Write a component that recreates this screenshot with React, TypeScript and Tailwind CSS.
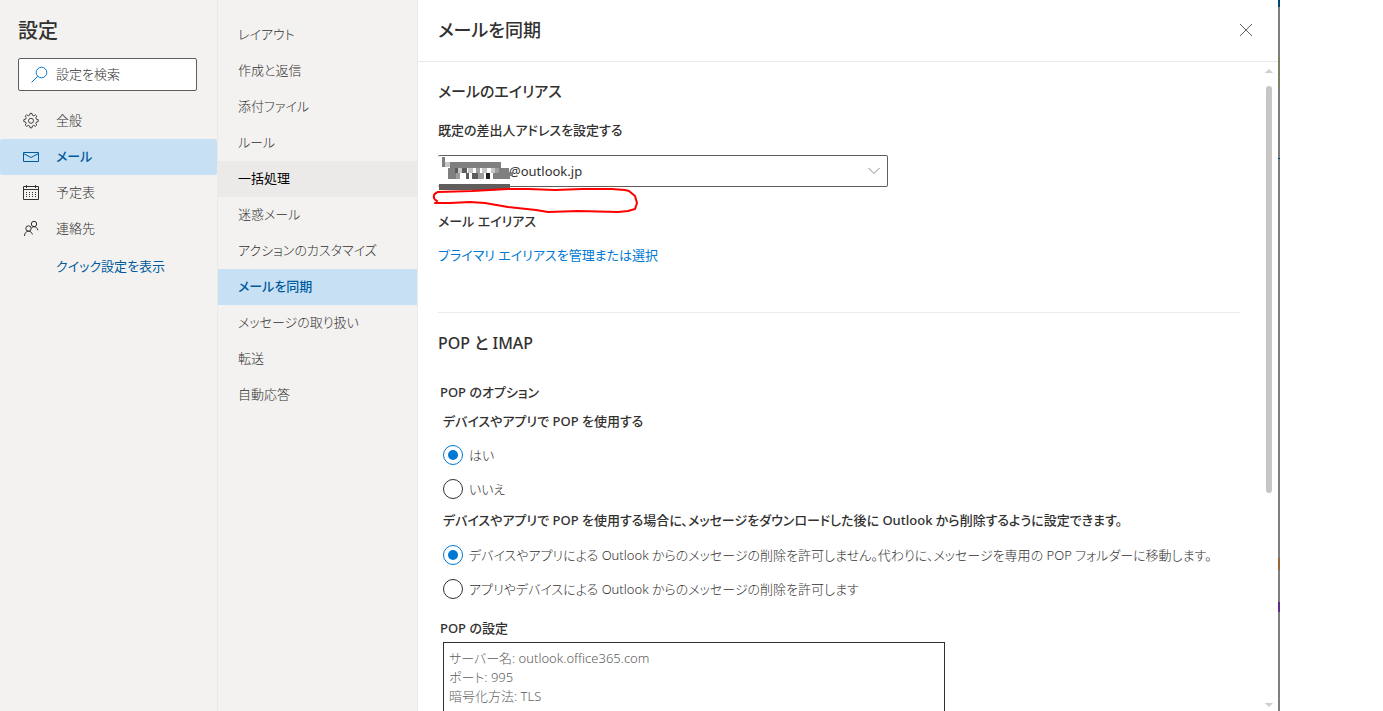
import React, { useState } from 'react';

const mainMenu = [
  { id: 'general', label: '全般', icon: GearIcon },
  { id: 'mail', label: 'メール', icon: MailIcon },
  { id: 'calendar', label: '予定表', icon: CalendarIcon },
  { id: 'people', label: '連絡先', icon: PeopleIcon },
];

const mailMenu = [
  'レイアウト',
  '作成と返信',
  '添付ファイル',
  'ルール',
  '一括処理',
  '迷惑メール',
  'アクションのカスタマイズ',
  'メールを同期',
  'メッセージの取り扱い',
  '転送',
  '自動応答',
];

// 歯車の 8 枚歯
function GearIcon() {
  return (
    <svg width="18" height="18" viewBox="0 0 18 18" fill="none" stroke="currentColor" strokeWidth="0.9">
      <path d="M7.600 3.200 8 1.400h2l.4 1.800 1.400.6 1.600-1 1.400 1.400-1 1.600.6 1.400 1.800.4v2l-1.800.4-.6 1.400 1 1.600-1.400 1.400-1.600-1-1.400.6-.4 1.800H8l-.4-1.800-1.400-.6-1.600 1L3.200 13l1-1.600-.6-1.400-1.800-.4v-2l1.800-.4.6-1.400-1-1.600L4.600 2.800l1.600 1z" />
      <circle cx="9" cy="8.800" r="2.500" />
    </svg>
  );
}

function MailIcon() {
  return (
    <svg width="18" height="18" viewBox="0 0 18 18" fill="none" stroke="currentColor">
      <path d="M1.500 4.500h15v9h-15z" />
      <path d="M1.500 5.500 9 9.500l7.500-4" />
    </svg>
  );
}

function CalendarIcon() {
  return (
    <svg width="18" height="18" viewBox="0 0 18 18" fill="none" stroke="currentColor">
      <path d="M1.500 2.500h15v13h-15zM1.500 5.500h15M4.500 1v3M13.500 1v3" />
      <path d="M4 8.500h10M4 10.500h10M4 12.500h10" strokeDasharray="1 2" />
    </svg>
  );
}

function PeopleIcon() {
  return (
    <svg width="18" height="18" viewBox="0 0 18 18" fill="none" stroke="currentColor">
      <circle cx="6.500" cy="8.500" r="2.700" />
      <path d="M2.500 16c0-2.800 1.600-4.800 4-4.800s3.300 1.500 3.900 3.300" />
      <circle cx="12" cy="4" r="2.700" />
      <path d="M9.300 8.300c.7-1 1.600-1.600 2.700-1.600 2 0 3.400 1.400 3.900 3.600" />
    </svg>
  );
}

type RadioProps = {
  name: string;
  label: string;
  checked: boolean;
  onChange: () => void;
};

function Radio({ name, label, checked, onChange }: RadioProps) {
  return (
    <label className="flex h-[34px] items-center gap-1.5">
      <input
        type="radio"
        name={name}
        checked={checked}
        onChange={onChange}
        className="grid size-5 shrink-0 appearance-none place-content-center rounded-full border border-[#323130] bg-white before:size-2.5 before:rounded-full checked:border-[#0078d4] checked:before:bg-[#0078d4]"
      />
      <span>{label}</span>
    </label>
  );
}

export default function App() {
  const [section, setSection] = useState('mail');
  const [page, setPage] = useState('メールを同期');
  const [usePop, setUsePop] = useState(true);
  const [allowDelete, setAllowDelete] = useState(false);

  return (
    <div className="flex h-screen overflow-hidden bg-white font-['Noto_Sans','Noto_Sans_CJK_JP',sans-serif] text-[13px] leading-5 font-light text-[#323130] [font-feature-settings:'palt']">
      {/* 左メニュー */}
      <aside className="w-[218px] shrink-0 border-r border-[#eaeaea] bg-[#f3f2f1]">
        <h1 className="px-[18px] pt-4 text-xl leading-[30px] font-medium">設定</h1>
        <label className="mx-[18px] mt-3 mb-3 flex h-[33px] w-[179px] items-center gap-2 rounded-xs border border-[#605e5c] bg-white pl-3">
          <svg width="17" height="17" viewBox="0 0 17 17" fill="none" stroke="#0078d4" className="shrink-0">
            <circle cx="10.500" cy="6.500" r="5.300" />
            <path d="M6.600 10.400.600 16.400" />
          </svg>
          <input
            type="search"
            aria-label="設定を検索"
            placeholder="設定を検索"
            className="w-full min-w-0 pb-0.5 outline-none placeholder:text-[#323130]"
          />
        </label>
        <nav>
          {mainMenu.map(({ id, label, icon: Icon }) => (
            <button
              key={id}
              onClick={() => setSection(id)}
              className={
                section === id
                  ? 'flex h-9 w-full items-center gap-4 rounded-xs bg-[#c7e0f4] pl-[22px] font-medium text-[#005a9e]'
                  : 'flex h-9 w-full items-center gap-4 rounded-xs pl-[22px]'
              }
            >
              <Icon />
              <span className="pb-0.5">{label}</span>
            </button>
          ))}
        </nav>
        <a href="#quick" className="mt-[9px] ml-14 inline-block font-normal text-[#005a9e]">
          クイック設定を表示
        </a>
      </aside>

      {/* メールのサブメニュー */}
      <nav className="w-[200px] shrink-0 border-r border-[#eaeaea] bg-[#f3f2f1] pt-[17px]">
        {mailMenu.map((item) => (
          <button
            key={item}
            onClick={() => setPage(item)}
            className={
              page === item
                ? 'block h-9 w-full bg-[#c7e0f4] pb-0.5 pl-5 text-left font-medium text-[#005a9e]'
                : item === '一括処理'
                  ? 'block h-9 w-full bg-[#ebeae9] pb-0.5 pl-5 text-left font-normal text-black'
                  : 'block h-9 w-full pb-0.5 pl-5 text-left hover:bg-[#ebeae9]'
            }
          >
            {item}
          </button>
        ))}
      </nav>

      {/* 設定内容 */}
      <main className="flex min-w-0 flex-1 flex-col">
        <header className="flex h-[62px] shrink-0 items-center justify-between border-b border-[#eaeaea] pr-6 pb-0.5 pl-5">
          <h2 className="text-lg font-medium">メールを同期</h2>
          <button aria-label="閉じる" className="grid size-4 place-content-center">
            <svg width="14" height="14" viewBox="0 0 14 14" stroke="#605e5c">
              <path d="M1 1l12 12M13 1 1 13" />
            </svg>
          </button>
        </header>

        <div className="flex min-h-0 flex-1">
          <div className="min-w-0 flex-1 overflow-hidden pr-5 pl-5">
            <section className="border-b border-[#eaeaea] pb-[47px]">
              <h3 className="pt-[17px] text-[15px] leading-6 font-medium">メールのエイリアス</h3>
              <label htmlFor="from" className="mt-[17px] block font-medium">
                既定の差出人アドレスを設定する
              </label>
              <div className="relative mt-[15px] h-8 w-[450px]">
                <select
                  id="from"
                  className="size-full appearance-none rounded-xs border border-l-0 border-[#605e5c] bg-white pl-[71px] font-normal outline-none"
                >
                  <option>@outlook.jp</option>
                </select>
                <svg
                  width="12"
                  height="8"
                  viewBox="0 0 12 8"
                  fill="none"
                  stroke="#8a8886"
                  className="pointer-events-none absolute top-3 right-2"
                >
                  <path d="M.500 1 6 6.500 11.500 1" />
                </svg>
                <Redaction />
              </div>
              <p className="mt-6 font-medium">メール エイリアス</p>
              <a href="#alias" className="mt-3.5 inline-block font-normal text-[#0078d4]">
                プライマリ エイリアスを管理または選択
              </a>
            </section>

            <section>
              <h3 className="mt-[18px] text-base leading-6 font-medium">POP と IMAP</h3>
              <h4 className="mt-[27px] ml-0.5 font-medium">POP のオプション</h4>
              <fieldset className="ml-[5px]">
                <legend className="pt-[9px] pb-[7px] font-medium">デバイスやアプリで POP を使用する</legend>
                <Radio name="pop" label="はい" checked={usePop} onChange={() => setUsePop(true)} />
                <Radio name="pop" label="いいえ" checked={!usePop} onChange={() => setUsePop(false)} />
              </fieldset>
              <fieldset className="ml-[5px]">
                <legend className="pt-1 pb-2 font-medium">
                  デバイスやアプリで POP を使用する場合に、メッセージをダウンロードした後に Outlook から削除するように設定できます。
                </legend>
                <Radio
                  name="delete"
                  label="デバイスやアプリによる Outlook からのメッセージの削除を許可しません。代わりに、メッセージを専用の POP フォルダーに移動します。"
                  checked={!allowDelete}
                  onChange={() => setAllowDelete(false)}
                />
                <Radio
                  name="delete"
                  label="アプリやデバイスによる Outlook からのメッセージの削除を許可します"
                  checked={allowDelete}
                  onChange={() => setAllowDelete(true)}
                />
              </fieldset>
              <h4 className="mt-3 ml-0.5 font-medium">POP の設定</h4>
              <div className="mt-1 ml-[5px] w-[502px] border border-[#323130] px-[5px] pt-1.5 pb-4 leading-[19px] text-[#605e5c]">
                <p>サーバー名: outlook.office365.com</p>
                <p>ポート: 995</p>
                <p>暗号化方法: TLS</p>
              </div>
            </section>
          </div>

          {/* スクロールバー */}
          <div className="flex w-[18px] shrink-0 flex-col items-center pt-[7px] pb-1">
            <svg width="8" height="4" viewBox="0 0 8 4" fill="#c8d0d4">
              <path d="M4 0 8 4H0z" />
            </svg>
            <div className="mt-[13px] flex w-1.5 flex-1 flex-col">
              <div className="h-[66%] rounded-full bg-[#c8c6c4]" />
            </div>
            <svg width="8" height="4" viewBox="0 0 8 4" fill="#c8d0d4">
              <path d="M0 0h8L4 4z" />
            </svg>
          </div>
        </div>
      </main>

      {/* 背面ウィンドウの端 */}
      <div className="flex w-0.5 shrink-0 flex-col bg-[#7f7f7f]">
        <div className="h-[7px] bg-[#004578]" />
        <div className="mt-[50px] h-8 bg-[#7f7f66]" />
        <div className="mt-[69px] h-px bg-[#004578]" />
        <div className="mt-[399px] h-3 bg-[#996633]" />
        <div className="mt-8 h-2.5 bg-[#5b2d90]" />
      </div>
      <div className="w-[103px] shrink-0" />
    </div>
  );
}

// アドレスを隠すモザイクと赤い手書きの囲み
function Redaction() {
  return (
    <svg
      width="212"
      height="66"
      viewBox="0 0 212 66"
      fill="none"
      className="pointer-events-none absolute -top-1 -left-2"
      aria-hidden="true"
    >
      <path fill="#7f7f7f" d="M12 6h3v10h-3zM20 11h51v6H20zM18 17h7v5h-7zM18 22h8v6h-8zM69 17h10v4h4v4h-3v3H63v-6h6z" />
      <path fill="#c8c6c4" d="M15 11h5v5h-5zM28 17h4v5h-4zM38 17h5v5h-5zM52 17h5v5h-5zM61 17h4v5h-4z" />
      <path fill="#5c5c5c" d="M25 17h3v5h-3zM42 22h6v6h-6zM36 22h3v6h-3zM32 17h5v5h-5z" />
      <path fill="#222" d="M56 22h4v6h-4z" />
      <path fill="#9d9d9d" d="M48 22h6v6h-6zM26 22h4v6h-4zM46 17h4v5h-4zM65 17h4v5h-4z" />
      <path fill="#605e5c" d="M9 33h71v6H9z" />
      <path
        stroke="#f00"
        strokeWidth="2"
        strokeLinecap="round"
        strokeLinejoin="round"
        d="M7 50C3 48 2 43 8 41l34-1 36-2h20l27 1 27-1h30l13 1 4 1 6 5 2 7-2 6-7 2-10 1-40-1-30 1-12-2-28-3-23-4-15-1-20 1H5"
      />
    </svg>
  );
}
